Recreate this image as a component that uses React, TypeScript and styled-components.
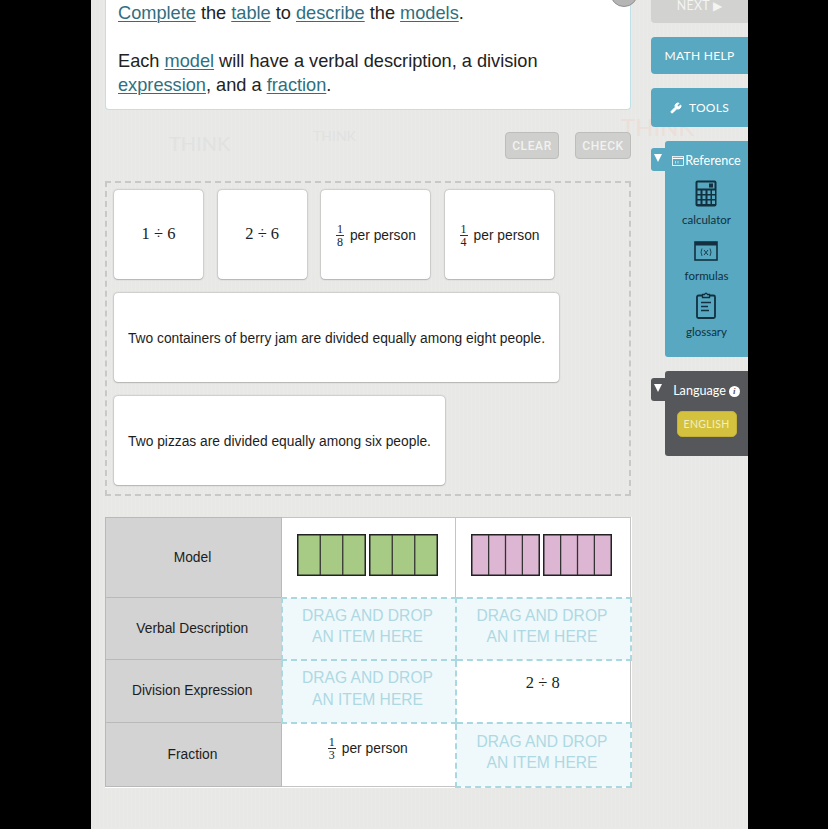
import React from "react";
import styled, { createGlobalStyle } from "styled-components";
import { Wrench } from "lucide-react";

const GlobalStyle = createGlobalStyle`
  html, body {
    margin: 0;
    padding: 0;
    height: 100%;
    background: #000;
    overflow: hidden;
    font-family: "Liberation Sans", Arial, sans-serif;
  }
`;

const Page = styled.div`
  position: relative;
  width: 657px;
  height: 829px;
  margin-left: 91px;
  box-sizing: border-box;
  padding-left: 14px;
  display: flex;
  gap: 20px;
  overflow: hidden;
  background-color: #e8e8e6;
  background-image: repeating-linear-gradient(90deg, rgba(255, 255, 255, 0.1) 0 1px, transparent 1px 4px);
`;

const Watermark = styled.span<{ $x: number; $y: number; $size: number; $color?: string }>`
  position: absolute;
  left: ${(p) => p.$x}px;
  top: ${(p) => p.$y}px;
  font-size: ${(p) => p.$size}px;
  color: ${(p) => p.$color || "#e0e2e1"};
  font-family: "Lato", sans-serif;
  white-space: nowrap;
`;

const MainColumn = styled.div`
  position: relative;
  z-index: 1;
  width: 526px;
  flex: none;
  display: flex;
  flex-direction: column;
`;

const Instructions = styled.div`
  box-sizing: border-box;
  height: 110px;
  padding: 0 12px;
  background: #fff;
  border: 1px solid #bfe0e6;
  border-top: none;
  border-radius: 0 0 4px 4px;
  font-size: 18.2px;
  line-height: 24px;
  color: #222;
`;

const Para = styled.p<{ $offset: number }>`
  margin: ${(p) => p.$offset}px 0 0;
`;

const Term = styled.span`
  color: #2f6f80;
  text-decoration: underline;
  text-underline-offset: 2px;
  text-decoration-thickness: 1px;
`;

const CloseDot = styled.div`
  position: absolute;
  top: -21px;
  right: -7px;
  width: 28px;
  height: 28px;
  box-sizing: border-box;
  border-radius: 50%;
  background: #b5b5b5;
  border: 1px solid #8f8f8f;
`;

const ActionRow = styled.div`
  display: flex;
  justify-content: flex-end;
  gap: 16px;
  margin-top: 22px;
`;

const ActionButton = styled.div<{ $width: number }>`
  width: ${(p) => p.$width}px;
  height: 27px;
  box-sizing: border-box;
  display: flex;
  align-items: center;
  justify-content: center;
  background: #cfcfcd;
  border: 1px solid #bdbdbb;
  border-radius: 4px;
  color: #f2f2f0;
  font-family: "Roboto", sans-serif;
  font-size: 12px;
  font-weight: 500;
  letter-spacing: 0.6px;
`;

const Tray = styled.div`
  box-sizing: border-box;
  height: 315px;
  margin-top: 22px;
  padding: 7px 7px 0;
  border: 2px dashed #c8c8c6;
  display: flex;
  flex-direction: column;
  gap: 14px;
`;

const CardRow = styled.div`
  display: flex;
  gap: 14.7px;
`;

const Card = styled.div<{ $width: number }>`
  width: ${(p) => p.$width}px;
  height: 89px;
  box-sizing: border-box;
  padding-top: 2px;
  flex: none;
  display: flex;
  align-items: center;
  justify-content: center;
  background: #fff;
  border-radius: 4px;
  box-shadow: 0 0 2px rgba(0, 0, 0, 0.4), 0 1px 1px rgba(0, 0, 0, 0.12);
  font-size: 13.8px;
  color: #1d1d1d;
`;

const CardMath = styled.span`
  padding-bottom: 3px;
`;

const CardFraction = styled.span`
  padding-bottom: 2px;
`;

const MathText = styled.span`
  font-family: "Liberation Serif", serif;
  font-size: 16.5px;
  color: #222;
`;

const FractionWrap = styled.span`
  display: inline-flex;
  align-items: center;
  gap: 6px;
  padding-bottom: 1px;
  font-size: 13.8px;
  color: #1d1d1d;
`;

const Fraction = styled.span`
  display: inline-flex;
  flex-direction: column;
  align-items: center;
  font-family: "Liberation Serif", serif;
  font-size: 12px;
  line-height: 10.5px;
  color: #222;
`;

const FractionNum = styled.span`
  border-bottom: 1px solid #333;
  padding: 0 1px 1px;
`;

const FractionDen = styled.span`
  padding-top: 1px;
`;

const Grid = styled.table`
  width: 525px;
  height: 269px;
  margin-top: 21px;
  border-collapse: collapse;
  table-layout: fixed;
  background: #fff;
  font-size: 13.8px;
  color: #1d1d1d;
`;

const HeadCell = styled.th`
  background: #d2d3d2;
  border: 1px solid #b9b9b9;
  font-weight: 400;
  text-align: center;
  padding: 0 2px 1px 0;
`;

const Cell = styled.td`
  border: 1px solid #c4c4c4;
  text-align: center;
  vertical-align: top;
  padding: 0 1px 0 0;
`;

const ModelCell = styled(Cell)`
  vertical-align: middle;
  line-height: 0;
  padding: 0 3px 4px 0;
`;

const DropCell = styled.td`
  border: 2px dashed #aad8e0;
  background: #eff9fc;
  color: #aed8e2;
  text-align: center;
  font-size: 15.6px;
  line-height: 21.5px;
  padding: 0 2px 5px 0;
`;

const FilledContent = styled.div<{ $top: number }>`
  padding-top: ${(p) => p.$top}px;
`;

const Side = styled.aside`
  position: relative;
  z-index: 1;
  width: 97px;
  flex: none;
  display: flex;
  flex-direction: column;
  font-family: "Lato", sans-serif;
  color: #fff;
`;

const NextButton = styled.div`
  height: 33px;
  margin-top: -10px;
  box-sizing: border-box;
  padding: 0 0 3px;
  display: flex;
  align-items: center;
  justify-content: center;
  background: #d2d2d0;
  border-radius: 4px 0 0 4px;
  color: #f4f4f2;
  font-size: 12.4px;
  letter-spacing: 0.3px;
`;

const SideButton = styled.div<{ $height: number }>`
  height: ${(p) => p.$height}px;
  margin-top: 14px;
  display: flex;
  align-items: center;
  justify-content: center;
  gap: 7px;
  background: #57a8c0;
  border-radius: 4px 0 0 4px;
  font-size: 12px;
  letter-spacing: 0.3px;
`;

const PanelRow = styled.div`
  display: flex;
  margin-top: 14px;
`;

const Toggle = styled.div<{ $bg: string }>`
  width: 14px;
  height: 23px;
  margin-top: 7px;
  flex: none;
  display: flex;
  align-items: center;
  justify-content: center;
  padding-bottom: 3px;
  box-sizing: border-box;
  background: ${(p) => p.$bg};
  border-radius: 3px 0 0 3px;
`;

const ToggleArrow = styled.span`
  width: 0;
  height: 0;
  border-left: 4px solid transparent;
  border-right: 4px solid transparent;
  border-top: 8px solid #fff;
`;

const Panel = styled.div<{ $bg: string; $height: number }>`
  flex: 1;
  height: ${(p) => p.$height}px;
  box-sizing: border-box;
  display: flex;
  flex-direction: column;
  align-items: center;
  background: ${(p) => p.$bg};
  border-radius: 3px 0 0 3px;
`;

const PanelTitle = styled.div`
  margin-top: 12px;
  display: flex;
  align-items: center;
  gap: 1px;
  font-size: 12.6px;
  line-height: 16px;
`;

const ToolItem = styled.div<{ $height: number; $gap: number }>`
  height: ${(p) => p.$height}px;
  display: flex;
  flex-direction: column;
  align-items: center;
  justify-content: flex-end;
  gap: ${(p) => p.$gap}px;
  color: #12303f;
  font-size: 11.5px;
  line-height: 14px;
`;

const InfoDot = styled.span`
  width: 11px;
  height: 11px;
  margin-left: 2px;
  border-radius: 50%;
  background: #fff;
  color: #55575a;
  display: inline-flex;
  align-items: center;
  justify-content: center;
  font-family: "Liberation Serif", serif;
  font-size: 9px;
  font-style: italic;
  font-weight: 700;
`;

const EnglishButton = styled.div`
  width: 60px;
  height: 26px;
  margin-top: 12px;
  display: flex;
  align-items: center;
  justify-content: center;
  background: #d4c23f;
  border: 1px solid #c2b13a;
  box-sizing: border-box;
  border-radius: 5px;
  color: #f3efc0;
  font-size: 10.5px;
  letter-spacing: 0.3px;
`;

const FractionText = ({ den }: { den: number }) => (
  <FractionWrap>
    <Fraction>
      <FractionNum>1</FractionNum>
      <FractionDen>{den}</FractionDen>
    </Fraction>
    per person
  </FractionWrap>
);

const DropHint = () => (
  <DropCell>
    DRAG AND DROP
    <br />
    AN ITEM HERE
  </DropCell>
);

// two wholes side by side, each cut into equal parts
const BarModel = ({ parts, fill }: { parts: number; fill: string }) => {
  const whole = (x: number) => (
    <g key={x}>
      <rect x={x + 0.75} y={0.75} width={67.5} height={40.5} fill={fill} stroke="#222" strokeWidth={1.5} />
      {Array.from({ length: parts - 1 }, (_, i) => {
        const lx = x + 0.75 + (67.5 * (i + 1)) / parts;
        return <line key={i} x1={lx} x2={lx} y1={1} y2={41} stroke="#333" strokeWidth={1.3} />;
      })}
    </g>
  );
  return (
    <svg width={141} height={42} viewBox="0 0 141 42">
      {whole(0)}
      {whole(72)}
    </svg>
  );
};

const CalculatorIcon = () => (
  <svg width={22} height={27} viewBox="0 0 22 27">
    <rect x={0.5} y={0.5} width={21} height={26} rx={2} fill="#12303f" />
    <rect x={2.5} y={2.5} width={17} height={6} fill="#57a8c0" />
    <rect x={14} y={3.5} width={4} height={4} fill="#12303f" />
    {[10.5, 15.5, 20.5].map((y) =>
      [2.5, 7.5, 12.5, 17].map((x) => <rect key={`${x}-${y}`} x={x} y={y} width={3} height={3.5} fill="#57a8c0" />),
    )}
  </svg>
);

const FormulasIcon = () => (
  <svg width={24} height={20} viewBox="0 0 24 20">
    <rect x={1} y={1} width={22} height={18} fill="none" stroke="#12303f" strokeWidth={1.6} />
    <rect x={1} y={1} width={22} height={3.5} fill="#12303f" />
    <path d="M8 7.5 Q6 11 8 15 M16 7.5 Q18 11 16 15" fill="none" stroke="#12303f" strokeWidth={0.8} />
    <path d="M10 9 L14 14 M14 9 L10 14" fill="none" stroke="#12303f" strokeWidth={0.9} />
  </svg>
);

const GlossaryIcon = () => (
  <svg width={20} height={27} viewBox="0 0 20 27" fill="none" stroke="#12303f">
    <rect x={1} y={3.5} width={18} height={22.5} rx={1.5} strokeWidth={1.8} />
    <path d="M6.5 5.5 V2.5 H8.5 Q10 0 11.5 2.5 H13.5 V5.5 Z" fill="#57a8c0" strokeWidth={1.3} />
    <path d="M5 10.5 H15 M5 14.5 H12 M5 18.5 H13" strokeWidth={1.5} />
  </svg>
);

const ReferenceGlyph = () => (
  <svg width={12} height={10} viewBox="0 0 12 10" fill="none" stroke="#fff">
    <rect x={0.5} y={0.5} width={11} height={9} strokeWidth={0.8} />
    <path d="M0.5 2.4 H11.5" strokeWidth={1.2} />
    <path d="M3.5 5 V7.5 M6 5 V7.5" strokeWidth={0.6} />
  </svg>
);

export default function App() {
  return (
    <>
      <GlobalStyle />
      <Page>
        <Watermark $x={78} $y={131} $size={20}>THINK</Watermark>
        <Watermark $x={222} $y={127} $size={14}>THINK</Watermark>
        <Watermark $x={530} $y={112} $size={24} $color="#ecdfda">THINK</Watermark>

        <MainColumn>
          <Instructions>
            <Para $offset={1}>
              <Term>Complete</Term> the <Term>table</Term> to <Term>describe</Term> the <Term>models</Term>.
            </Para>
            <Para $offset={24}>
              Each <Term>model</Term> will have a verbal description, a division <Term>expression</Term>, and a{" "}
              <Term>fraction</Term>.
            </Para>
          </Instructions>
          <CloseDot />

          <ActionRow>
            <ActionButton $width={54}>CLEAR</ActionButton>
            <ActionButton $width={56}>CHECK</ActionButton>
          </ActionRow>

          <Tray>
            <CardRow>
              <Card $width={89}>
                <CardMath>
                  <MathText>1 ÷ 6</MathText>
                </CardMath>
              </Card>
              <Card $width={89}>
                <CardMath>
                  <MathText>2 ÷ 6</MathText>
                </CardMath>
              </Card>
              <Card $width={109}>
                <CardFraction>
                  <FractionText den={8} />
                </CardFraction>
              </Card>
              <Card $width={109}>
                <CardFraction>
                  <FractionText den={4} />
                </CardFraction>
              </Card>
            </CardRow>
            <Card $width={445}>Two containers of berry jam are divided equally among eight people.</Card>
            <Card $width={331}>Two pizzas are divided equally among six people.</Card>
          </Tray>

          <Grid>
            <colgroup>
              <col style={{ width: 176 }} />
              <col style={{ width: 174 }} />
              <col style={{ width: 175 }} />
            </colgroup>
            <tbody>
              <tr style={{ height: 80 }}>
                <HeadCell>Model</HeadCell>
                <ModelCell>
                  <BarModel parts={3} fill="#a7cb85" />
                </ModelCell>
                <ModelCell>
                  <BarModel parts={4} fill="#dcb6d2" />
                </ModelCell>
              </tr>
              <tr style={{ height: 62 }}>
                <HeadCell>Verbal Description</HeadCell>
                <DropHint />
                <DropHint />
              </tr>
              <tr style={{ height: 63 }}>
                <HeadCell>Division Expression</HeadCell>
                <DropHint />
                <Cell>
                  <FilledContent $top={12}>
                    <MathText>2 ÷ 8</MathText>
                  </FilledContent>
                </Cell>
              </tr>
              <tr style={{ height: 64 }}>
                <HeadCell>Fraction</HeadCell>
                <Cell>
                  <FilledContent $top={10}>
                    <FractionText den={3} />
                  </FilledContent>
                </Cell>
                <DropHint />
              </tr>
            </tbody>
          </Grid>
        </MainColumn>

        <Side>
          <NextButton>NEXT ▶</NextButton>
          <SideButton $height={37}>MATH HELP</SideButton>
          <SideButton $height={39}>
            <Wrench size={12} fill="#fff" strokeWidth={2} />
            TOOLS
          </SideButton>

          <PanelRow>
            <Toggle $bg="#57a8c0">
              <ToggleArrow />
            </Toggle>
            <Panel $bg="#57a8c0" $height={216}>
              <PanelTitle>
                <ReferenceGlyph />
                Reference
              </PanelTitle>
              <ToolItem $height={58} $gap={6}>
                <CalculatorIcon />
                calculator
              </ToolItem>
              <ToolItem $height={56} $gap={8}>
                <FormulasIcon />
                formulas
              </ToolItem>
              <ToolItem $height={56} $gap={6}>
                <GlossaryIcon />
                glossary
              </ToolItem>
            </Panel>
          </PanelRow>

          <PanelRow>
            <Toggle $bg="#55575a">
              <ToggleArrow />
            </Toggle>
            <Panel $bg="#55575a" $height={85}>
              <PanelTitle>
                Language
                <InfoDot>i</InfoDot>
              </PanelTitle>
              <EnglishButton>ENGLISH</EnglishButton>
            </Panel>
          </PanelRow>
        </Side>
      </Page>
    </>
  );
}
